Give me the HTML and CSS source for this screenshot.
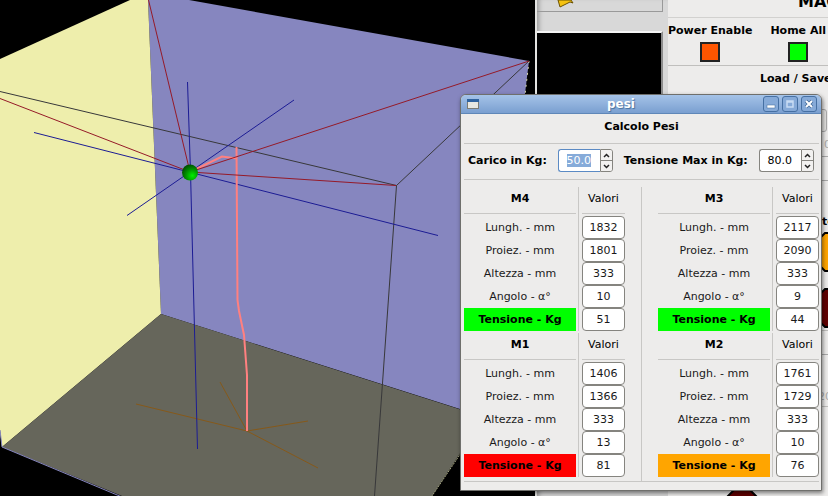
FILE: index.html
```html
<!DOCTYPE html>
<html lang="en">
<head>
    <meta charset="UTF-8">
    <meta name="viewport" content="width=device-width, initial-scale=1.0">
    <title>pesi</title>
    <link rel="stylesheet" href="styles.css">
</head>
<body>
    <div class="desktop">
        <div class="scene">
            <svg class="scene-view" viewBox="0 0 535 496" preserveAspectRatio="xMinYMin slice">
                <defs>
                    <radialGradient id="ball" cx="0.65" cy="0.7" r="0.75">
                        <stop offset="0" stop-color="#00f000"/>
                        <stop offset="0.5" stop-color="#009800"/>
                        <stop offset="1" stop-color="#004800"/>
                    </radialGradient>
                </defs>
                <!-- walls and floor -->
                <polygon fill="#8686bf" points="148,0 189,0 529,61 485,417 161,314"/>
                <polygon fill="#eeeeac" points="0,59 130,0 148,0 161,314 2,447 0,430"/>
                <polygon fill="#66665b" points="161,314 484,417 432,496 122,496 2,447"/>
                <path fill="none" stroke="#8686bf" d="M0,430 L2,447 L122,497"/>
                <path fill="none" stroke="#a0a07c" stroke-dasharray="2 1" d="M461,453 L432,496"/>
                <path fill="none" stroke="#d8d8b0" stroke-dasharray="2 4" d="M529,61 L525,95"/>
                <!-- frame -->
                <path fill="none" stroke="#38383a" d="M0,91.500 L396.500,185.500 L529,61 M396.500,185.500 L374.500,496"/>
                <!-- feed lines on the floor -->
                <path fill="none" stroke="#86591a" d="M136,404 L247,431 L308,421 M220,382 L247,431 L318,468"/>
                <!-- axes -->
                <path fill="none" stroke="#1c1c94" d="M34,132.500 L438,235.500 M127,215.500 L294,100 M187.500,82 L190.500,172 L197.500,449"/>
                <!-- tool path -->
                <path fill="none" stroke="#ff8080" stroke-width="2" d="M190,172 L222,156.500 L237,158.500 M236.500,147 L237.500,300 L239,311 L244,335 L247,375 L247,431"/>
                <!-- cables -->
                <path fill="none" stroke="#951a28" d="M148.500,0 L190,172 L0,98.500 M529,61 L190,172 L396,185.500"/>
                <circle cx="190" cy="172.500" r="8" fill="url(#ball)"/>
            </svg>
        </div>

        <div class="machine">
            <div class="preview">
                <div class="toolbar">
                    <svg width="17" height="9" viewBox="0 0 17 9">
                        <path d="M1,0 L3,7 L13,2 L16,3 L14,0 Z" fill="#f5c211" stroke="#6b5200"/>
                    </svg>
                </div>
                <div class="backplot"></div>
            </div>
            <div class="panel">
                <div class="panel-title">MACH</div>
                <div class="leds">
                    <div class="led-item">Power Enable<span class="led led-orange"></span></div>
                    <div class="led-item">Home All<span class="led led-green"></span></div>
                </div>
                <div class="panel-heading">Load / Save</div>
                <div class="group">
                    <div class="box"></div>
                    <span class="dim">0</span>
                </div>
                <div class="band"></div>
                <div class="lamps">
                    <span>te</span>
                    <svg width="40" height="40" viewBox="0 0 40 40"><polygon points="12,1 28,1 39,12 39,28 28,39 12,39 1,28 1,12" fill="#ffa500" stroke="#000" stroke-width="2"/></svg>
                    <svg width="40" height="40" viewBox="0 0 40 40"><polygon points="12,1 28,1 39,12 39,28 28,39 12,39 1,28 1,12" fill="#600000" stroke="#000" stroke-width="2"/></svg>
                </div>
                <div class="band"></div>
                <div class="scale">20</div>
                <div class="stop">
                    <svg width="40" height="40" viewBox="0 0 40 40"><polygon points="12,1 28,1 39,12 39,28 28,39 12,39 1,28 1,12" fill="#600000" stroke="#000" stroke-width="2"/></svg>
                </div>
            </div>
        </div>

        <div class="window">
            <div class="titlebar">
                <svg width="12" height="10" viewBox="0 0 12 10">
                    <rect x="0.500" y="0.500" width="11" height="9" fill="#e8e8e2" stroke="#7c7c74"/>
                    <rect width="12" height="3" fill="#2f639f"/>
                </svg>
                <h1>pesi</h1>
                <button class="wbtn" aria-label="Minimize"><svg width="10" height="10" viewBox="0 0 10 10"><rect x="1" y="6" width="8" height="3" fill="#fff" stroke="#3f6797" stroke-width="0.500"/></svg></button>
                <button class="wbtn" aria-label="Maximize"><svg width="10" height="10" viewBox="0 0 10 10"><path d="M2,2 H8 V8 H2 Z M2,3 H8" fill="none" stroke="#c8dcf3" stroke-width="1.500"/></svg></button>
                <button class="wbtn" aria-label="Close"><svg width="10" height="10" viewBox="0 0 10 10"><path d="M2,2 L8,8 M8,2 L2,8" stroke="#3f6797" stroke-width="3.500"/><path d="M2,2 L8,8 M8,2 L2,8" stroke="#fff" stroke-width="2"/></svg></button>
            </div>
            <div class="content">
                <h2>Calcolo Pesi</h2>
                <div class="settings">
                    <label for="load">Carico in Kg:</label>
                    <div class="spin active">
                        <input id="load" type="text" value="50.0">
                        <div class="steps">
                            <button aria-label="Increase load"><svg width="7" height="5" viewBox="0 0 7 5"><path d="M1,4 L3.500,1.500 L6,4"/></svg></button>
                            <button aria-label="Decrease load"><svg width="7" height="5" viewBox="0 0 7 5"><path d="M1,1 L3.500,3.500 L6,1"/></svg></button>
                        </div>
                    </div>
                    <label for="max">Tensione Max in Kg:</label>
                    <div class="spin">
                        <input id="max" type="text" value="80.0">
                        <div class="steps">
                            <button aria-label="Increase tension"><svg width="7" height="5" viewBox="0 0 7 5"><path d="M1,4 L3.500,1.500 L6,4"/></svg></button>
                            <button aria-label="Decrease tension"><svg width="7" height="5" viewBox="0 0 7 5"><path d="M1,1 L3.500,3.500 L6,1"/></svg></button>
                        </div>
                    </div>
                </div>
                <div class="motors">
                    <table class="motor">
                        <tr><th><span>M4</span></th><th class="val"><span>Valori</span></th></tr>
                        <tr><td><label for="m4l">Lungh. - mm</label></td><td class="val"><input id="m4l" value="1832"></td></tr>
                        <tr><td><label for="m4p">Proiez. - mm</label></td><td class="val"><input id="m4p" value="1801"></td></tr>
                        <tr><td><label for="m4h">Altezza - mm</label></td><td class="val"><input id="m4h" value="333"></td></tr>
                        <tr><td><label for="m4a">Angolo - α°</label></td><td class="val"><input id="m4a" value="10"></td></tr>
                        <tr><td><label class="ok" for="m4t">Tensione - Kg</label></td><td class="val"><input id="m4t" value="51"></td></tr>
                    </table>
                    <table class="motor">
                        <tr><th><span>M3</span></th><th class="val"><span>Valori</span></th></tr>
                        <tr><td><label for="m3l">Lungh. - mm</label></td><td class="val"><input id="m3l" value="2117"></td></tr>
                        <tr><td><label for="m3p">Proiez. - mm</label></td><td class="val"><input id="m3p" value="2090"></td></tr>
                        <tr><td><label for="m3h">Altezza - mm</label></td><td class="val"><input id="m3h" value="333"></td></tr>
                        <tr><td><label for="m3a">Angolo - α°</label></td><td class="val"><input id="m3a" value="9"></td></tr>
                        <tr><td><label class="ok" for="m3t">Tensione - Kg</label></td><td class="val"><input id="m3t" value="44"></td></tr>
                    </table>
                    <table class="motor">
                        <tr><th><span>M1</span></th><th class="val"><span>Valori</span></th></tr>
                        <tr><td><label for="m1l">Lungh. - mm</label></td><td class="val"><input id="m1l" value="1406"></td></tr>
                        <tr><td><label for="m1p">Proiez. - mm</label></td><td class="val"><input id="m1p" value="1366"></td></tr>
                        <tr><td><label for="m1h">Altezza - mm</label></td><td class="val"><input id="m1h" value="333"></td></tr>
                        <tr><td><label for="m1a">Angolo - α°</label></td><td class="val"><input id="m1a" value="13"></td></tr>
                        <tr><td><label class="over" for="m1t">Tensione - Kg</label></td><td class="val"><input id="m1t" value="81"></td></tr>
                    </table>
                    <table class="motor">
                        <tr><th><span>M2</span></th><th class="val"><span>Valori</span></th></tr>
                        <tr><td><label for="m2l">Lungh. - mm</label></td><td class="val"><input id="m2l" value="1761"></td></tr>
                        <tr><td><label for="m2p">Proiez. - mm</label></td><td class="val"><input id="m2p" value="1729"></td></tr>
                        <tr><td><label for="m2h">Altezza - mm</label></td><td class="val"><input id="m2h" value="333"></td></tr>
                        <tr><td><label for="m2a">Angolo - α°</label></td><td class="val"><input id="m2a" value="10"></td></tr>
                        <tr><td><label class="warn" for="m2t">Tensione - Kg</label></td><td class="val"><input id="m2t" value="76"></td></tr>
                    </table>
                </div>
                <hr>
            </div>
        </div>
    </div>
    <script>
        const load = document.getElementById('load');
        load.focus();
        load.select();
    </script>
</body>
</html>
```
FILE: styles.css
```css
:root {
    --bg: #edeceb;
    --line: #c8c7c5;
    --border: #85847f;
    --selected: #86abd9;
    --ok: #00ff00;
    --warn: #ffa500;
    --over: #ff0000;
}

* {
    box-sizing: border-box;
}

body {
    margin: 0;
    font-family: "DejaVu Sans", sans-serif;
    font-size: 11px;
    color: #1a1a1a;
    background: #000;
}

button,
input {
    font: inherit;
    color: inherit;
    margin: 0;
    padding: 0;
}

svg {
    display: block;
}

.desktop {
    position: relative;
    display: flex;
    height: 100vh;
    overflow: hidden;
}

.scene {
    flex: 1;
    min-width: 0;
}

.scene-view {
    width: 100%;
    height: 100%;
}

/* main program window behind the dialog */
.machine {
    display: flex;
    width: 293px;
    border-left: 2px solid #e4e4e2;
    background: #d8d8d8;
    overflow: hidden;
}

.preview {
    display: flex;
    flex: none;
    flex-direction: column;
    width: 131px;
    padding-right: 5px;
    box-shadow: inset 5px 0 5px -3px #999;
}

.toolbar {
    height: 12px;
    padding-left: 20px;
    border-right: 1px solid #999;
    border-bottom: 1px solid #999;
}

.backplot {
    height: 420px;
    margin-top: 19px;
    background: #000;
    border-top: 2px solid #f4f4f4;
    border-right: 2px solid #8c8c8c;
}

.panel {
    flex: none;
    width: 290px;
    font-weight: bold;
    color: #000;
    background: var(--bg);
}

.panel-title {
    height: 18px;
    padding-left: 130px;
    font-size: 16px;
    line-height: 4px;
    border-bottom: 1px solid #d2d1cf;
}

.leds {
    display: flex;
    gap: 18px;
    height: 48px;
    padding-top: 5px;
    border-bottom: 1px solid #c0bfbd;
}

.led-item {
    display: flex;
    flex-direction: column;
    align-items: center;
    gap: 3px;
    line-height: 16px;
}

.led {
    width: 20px;
    height: 20px;
    border: 2px solid #222;
}

.led-orange {
    background: #ff5500;
}

.led-green {
    background: var(--ok);
}

.panel-heading {
    padding-left: 92px;
    line-height: 26px;
}

.group {
    display: flex;
    flex-direction: column;
    align-items: flex-start;
    gap: 6px;
    height: 65px;
    padding-top: 17px;
    border-bottom: 1px solid #aaa;
}

.box {
    width: 159px;
    height: 23px;
    border: 1px solid #aaa;
    border-radius: 3px;
    background: #e4e3e1;
}

.dim {
    padding-left: 156px;
    font-weight: normal;
    color: #aaa;
}

.band {
    height: 24px;
    border-bottom: 1px solid #aaa;
}

.lamps {
    display: flex;
    flex-direction: column;
    align-items: flex-start;
    gap: 16px;
    height: 150px;
    padding: 35px 0 0 145px;
    border-bottom: 1px solid #c0bfbd;
}

.lamps span {
    padding-left: 9px;
    line-height: 12px;
    margin-bottom: -12px;
}

.scale {
    height: 52px;
    padding: 36px 0 0 150px;
    font-weight: normal;
    line-height: 12px;
    color: #aaa;
    border-bottom: 1px solid #c0bfbd;
}

.stop {
    padding: 82px 0 0 54px;
}

/* dialog */
.window {
    position: absolute;
    top: 94px;
    right: 6px;
    width: 362px;
    background: var(--bg);
    border: 1px solid #6f6f6c;
    border-radius: 6px 6px 0 0;
    box-shadow: 1px 2px 4px rgba(0, 0, 0, 0.5);
}

.titlebar {
    display: flex;
    align-items: center;
    gap: 3px;
    height: 19px;
    padding: 0 4px 0 6px;
    border-bottom: 1px solid #5f87b8;
    border-radius: 5px 5px 0 0;
    background: linear-gradient(#a5c3e8, #7a9fd0);
}

.titlebar h1 {
    flex: 1;
    margin: 0;
    font-size: 12px;
    line-height: 18px;
    text-align: center;
    color: #fff;
    text-shadow: 1px 1px 1px #45709f;
}

.wbtn {
    display: flex;
    align-items: center;
    justify-content: center;
    width: 16px;
    height: 16px;
    border: 1px solid #4670a3;
    border-radius: 3px;
    background: #86aad8;
}

.content {
    padding: 0 2px 8px 3px;
}

.content h2 {
    margin: 0;
    font-size: 11px;
    line-height: 24px;
    padding: 1px 0 4px;
    text-align: center;
    color: #000;
    border-bottom: 1px solid var(--line);
}

.settings {
    display: flex;
    align-items: center;
    gap: 11px;
    height: 36px;
    padding: 0 0 2px 4px;
    font-weight: bold;
    color: #000;
    border-bottom: 1px solid var(--line);
}

.spin {
    display: flex;
    width: 55px;
    height: 23px;
    font-weight: normal;
}

.spin input {
    flex: 1;
    width: 0;
    padding-right: 1px;
    border: 1px solid var(--border);
    border-right: none;
    border-radius: 3px 0 0 3px;
    background: #fff;
    text-align: center;
    outline: none;
}

.spin.active input {
    border-color: #5b8ac4;
}

input::selection {
    color: #fff;
    background: var(--selected);
}

.steps {
    display: flex;
    flex-direction: column;
    width: 13px;
    border: 1px solid var(--border);
    border-radius: 0 3px 3px 0;
    overflow: hidden;
}

.steps button {
    display: flex;
    flex: 1;
    align-items: center;
    justify-content: center;
    border: none;
    background: #f2f1f0;
}

.steps button + button {
    border-top: 1px solid var(--border);
}

.steps path {
    fill: none;
    stroke: #222;
    stroke-width: 1.5;
}

.motors {
    display: grid;
    grid-template-columns: auto auto;
    justify-content: space-between;
    row-gap: 2px;
    padding: 7px 0 4px;
    background: linear-gradient(var(--line), var(--line)) 50% 7px / 1px 100% no-repeat;
}

.motor {
    border-spacing: 0;
    text-align: center;
}

.motor th,
.motor td {
    padding: 0;
}

.motor .val {
    padding-left: 3px;
    border-left: 1px solid var(--line);
}

.motor th span {
    display: block;
    height: 27px;
    margin-bottom: 2px;
    line-height: 23px;
    color: #000;
    border-bottom: 1px solid var(--line);
}

.motor th.val span {
    font-weight: normal;
}

.motor label {
    display: block;
    width: 112px;
    height: 23px;
    margin-right: 2px;
    line-height: 23px;
}

.motor th:first-child span {
    margin-right: 2px;
}

.motor input {
    display: block;
    width: 43px;
    height: 23px;
    border: 1px solid var(--border);
    border-radius: 4px;
    background: #fff;
    text-align: center;
}

.motor .ok,
.motor .warn,
.motor .over {
    font-weight: bold;
    color: #000;
}

.motor .ok {
    background: var(--ok);
}

.motor .warn {
    background: var(--warn);
}

.motor .over {
    background: var(--over);
}

.content hr {
    margin: 0;
    border: none;
    border-top: 1px solid var(--line);
}
```
